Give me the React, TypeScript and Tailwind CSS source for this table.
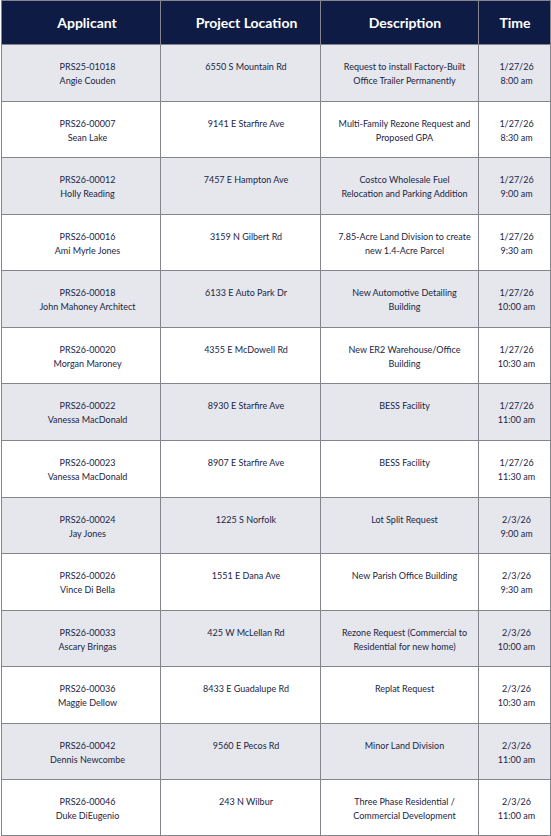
import React from "react";

const rows = [
  ["PRS25-01018", "Angie Couden", "6550 S Mountain Rd", ["Request to install Factory-Built", "Office Trailer Permanently"], "1/27/26", "8:00 am"],
  ["PRS26-00007", "Sean Lake", "9141 E Starfire Ave", ["Multi-Family Rezone Request and", "Proposed GPA"], "1/27/26", "8:30 am"],
  ["PRS26-00012", "Holly Reading", "7457 E Hampton Ave", ["Costco Wholesale Fuel", "Relocation and Parking Addition"], "1/27/26", "9:00 am"],
  ["PRS26-00016", "Ami Myrle Jones", "3159 N Gilbert Rd", ["7.85-Acre Land Division to create", "new 1.4-Acre Parcel"], "1/27/26", "9:30 am"],
  ["PRS26-00018", "John Mahoney Architect", "6133 E Auto Park Dr", ["New Automotive Detailing", "Building"], "1/27/26", "10:00 am"],
  ["PRS26-00020", "Morgan Maroney", "4355 E McDowell Rd", ["New ER2 Warehouse/Office", "Building"], "1/27/26", "10:30 am"],
  ["PRS26-00022", "Vanessa MacDonald", "8930 E Starfire Ave", ["BESS Facility"], "1/27/26", "11:00 am"],
  ["PRS26-00023", "Vanessa MacDonald", "8907 E Starfire Ave", ["BESS Facility"], "1/27/26", "11:30 am"],
  ["PRS26-00024", "Jay Jones", "1225 S Norfolk", ["Lot Split Request"], "2/3/26", "9:00 am"],
  ["PRS26-00026", "Vince Di Bella", "1551 E Dana Ave", ["New Parish Office Building"], "2/3/26", "9:30 am"],
  ["PRS26-00033", "Ascary Bringas", "425 W McLellan Rd", ["Rezone Request (Commercial to", "Residential for new home)"], "2/3/26", "10:00 am"],
  ["PRS26-00036", "Maggie Dellow", "8433 E Guadalupe Rd", ["Replat Request"], "2/3/26", "10:30 am"],
  ["PRS26-00042", "Dennis Newcombe", "9560 E Pecos Rd", ["Minor Land Division"], "2/3/26", "11:00 am"],
  ["PRS26-00046", "Duke DiEugenio", "243 N Wilbur", ["Three Phase Residential /", "Commercial Development"], "2/3/26", "11:00 am"],
] as const;

const heights = [57, 56, 57, 56, 57, 56, 57, 57, 56, 57, 56, 57, 56, 56];

const td = "border border-[#84848c] pt-[15px] align-top text-center text-[9px] leading-[13.5px] text-[#1b2545]";

export default function App() {
  return (
    <div className="w-[551px] h-[836px] bg-white" style={{ fontFamily: "Lato, 'Liberation Sans', sans-serif" }}>
      <table className="ml-[1px] w-[549px] table-fixed border-collapse">
        <colgroup>
          <col className="w-[159px]" />
          <col className="w-[160px]" />
          <col className="w-[158px]" />
          <col className="w-[72px]" />
        </colgroup>
        <thead>
          <tr className="h-[44px] bg-[#0e1c45] text-white">
            <th className="border border-[#84848c] pl-[12px] text-center align-middle text-[14px] font-bold">Applicant</th>
            <th className="border border-[#84848c] pl-[12px] text-center align-middle text-[14px] font-bold">Project Location</th>
            <th className="border border-[#84848c] pl-[11px] text-center align-middle text-[14px] font-bold">Description</th>
            <th className="border border-[#84848c] pl-[1px] text-center align-middle text-[14px] font-bold">Time</th>
          </tr>
        </thead>
        <tbody>
          {rows.map((r, i) => (
            <tr
              key={i}
              className={i % 2 === 0 ? "bg-[#e5e7ec]" : "bg-white"}
              style={{ height: heights[i] }}
            >
              <td className={`${td} pl-[13px]`}>
                <div>{r[0]}</div>
                <div>{r[1]}</div>
              </td>
              <td className={`${td} pl-[11px]`}>{r[2]}</td>
              <td className={`${td} pl-[10px]`}>
                {r[3].map((l) => (
                  <div key={l}>{l}</div>
                ))}
              </td>
              <td className={`${td} pl-[4px]`}>
                <div>{r[4]}</div>
                <div>{r[5]}</div>
              </td>
            </tr>
          ))}
        </tbody>
      </table>
    </div>
  );
}
